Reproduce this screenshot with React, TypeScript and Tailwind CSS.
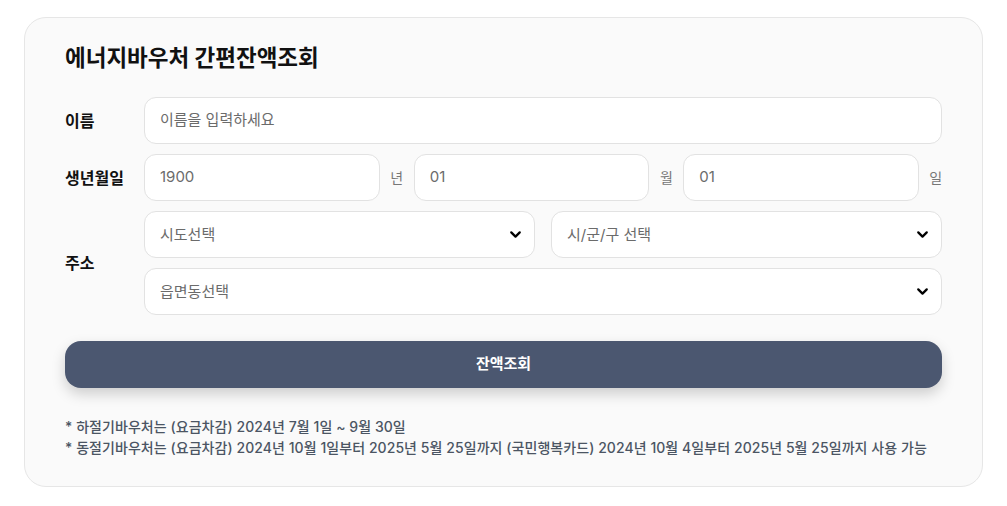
import { ChevronDown } from "lucide-react";

const fieldBox =
  "h-[47px] rounded-xl border border-[#e2e2e2] bg-white px-[15px] flex items-center text-[15px] text-[#6b6b6b]";

const SelectField = ({ label, className = "" }: { label: string; className?: string }) => (
  <div className={`${fieldBox} justify-between pr-[10px] ${className}`}>
    <span className="pt-[2px]">{label}</span>
    <ChevronDown size={17} strokeWidth={3.2} className="text-black" />
  </div>
);

export default function App() {
  return (
    <div
      className="min-h-[506px] bg-white pt-[17px] pl-6"
      style={{ fontFamily: 'Inter, "Noto Sans CJK KR", sans-serif' }}
    >
      <div className="w-[959px] rounded-[22px] border border-[#e6e6e6] bg-[#fafafa] px-10 pt-[25px] pb-[28px]">
        <h1 className="text-[22.5px] leading-[30px] font-bold text-[#111]">
          에너지바우처 간편잔액조회
        </h1>

        <div className="mt-[24px] flex flex-col gap-[10px]">
          <div className="flex items-center">
            <div className="w-[79px] text-[16px] font-bold text-[#111]">이름</div>
            <div className={`${fieldBox} flex-1`}>이름을 입력하세요</div>
          </div>

          <div className="flex items-center">
            <div className="w-[79px] text-[16px] font-bold text-[#111]">생년월일</div>
            <div className="flex flex-1 items-center">
              <div className={`${fieldBox} flex-1`}>1900</div>
              <span className="w-[34px] text-center text-[14px] text-[#777]">년</span>
              <div className={`${fieldBox} flex-1`}>01</div>
              <span className="w-[34px] text-center text-[14px] text-[#777]">월</span>
              <div className={`${fieldBox} flex-1`}>01</div>
              <span className="w-[23px] text-right text-[14px] text-[#777]">일</span>
            </div>
          </div>

          <div className="flex items-center">
            <div className="w-[79px] text-[16px] font-bold text-[#111]">주소</div>
            <div className="flex flex-1 flex-col gap-[10px]">
              <div className="flex gap-4">
                <SelectField label="시도선택" className="flex-1" />
                <SelectField label="시/군/구 선택" className="flex-1" />
              </div>
              <SelectField label="읍면동선택" />
            </div>
          </div>
        </div>

        <button className="mt-[26px] h-[47px] w-full rounded-2xl bg-[#4b5770] text-[15px] font-bold text-white shadow-[0_6px_14px_rgba(0,0,0,0.18)]">
          잔액조회
        </button>

        <div className="mt-[28px] text-[14px] leading-[21px] font-medium tracking-[0.06px] text-[#4b5563]">
          <p>* 하절기바우처는 (요금차감) 2024년 7월 1일 ~ 9월 30일</p>
          <p>
            * 동절기바우처는 (요금차감) 2024년 10월 1일부터 2025년 5월 25일까지 (국민행복카드) 2024년 10월 4일부터
            2025년 5월 25일까지 사용 가능
          </p>
        </div>
      </div>
    </div>
  );
}
